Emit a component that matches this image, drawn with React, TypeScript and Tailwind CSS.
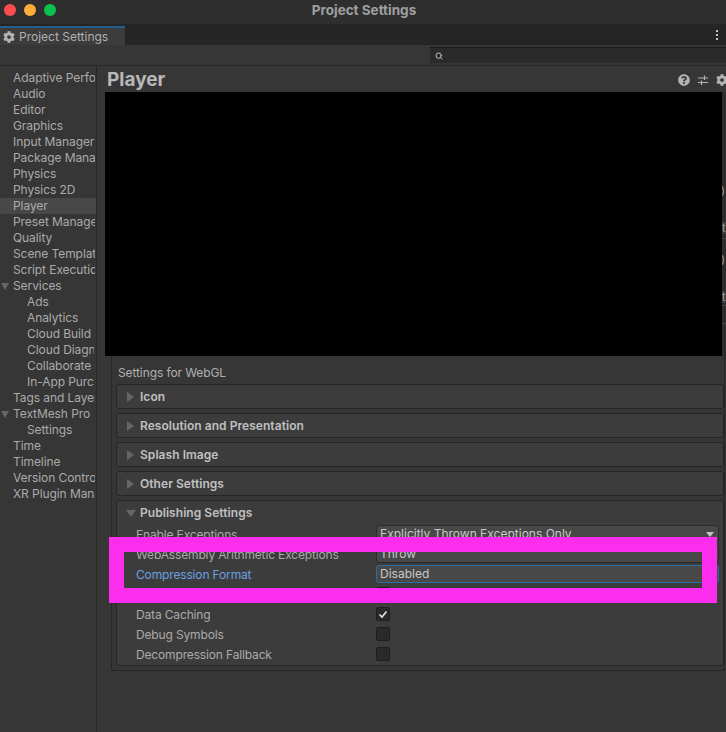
import React from "react";
import { Search } from "lucide-react";
import { FaCog, FaQuestionCircle } from "react-icons/fa";

const sidebar = [
  { label: "Adaptive Performance" },
  { label: "Audio" },
  { label: "Editor" },
  { label: "Graphics" },
  { label: "Input Manager" },
  { label: "Package Manager" },
  { label: "Physics" },
  { label: "Physics 2D" },
  { label: "Player", active: true },
  { label: "Preset Manager" },
  { label: "Quality" },
  { label: "Scene Template" },
  { label: "Script Execution Order" },
  { label: "Services", open: true },
  { label: "Ads", child: true },
  { label: "Analytics", child: true },
  { label: "Cloud Build", child: true },
  { label: "Cloud Diagnostics", child: true },
  { label: "Collaborate", child: true },
  { label: "In-App Purchasing", child: true },
  { label: "Tags and Layers" },
  { label: "TextMesh Pro", open: true },
  { label: "Settings", child: true },
  { label: "Time" },
  { label: "Timeline" },
  { label: "Version Control" },
  { label: "XR Plugin Management" },
];

function Foldout({ label }: { label: string }) {
  return (
    <div className="h-[25px] flex items-center rounded-[3px] border border-[#252525] bg-[#3c3c3c] pl-[10px] mb-1">
      <div className="w-0 h-0 border-y-[5px] border-y-transparent border-l-[7px] border-l-[#666666]" />
      <span className="ml-[6px] text-[12px] font-semibold tracking-[0.05px] text-[#c0c0c0]">{label}</span>
    </div>
  );
}

function Row({ label, blue, children }: { label: string; blue?: boolean; children?: React.ReactNode }) {
  return (
    <div className="h-5 flex items-center">
      <span className={`w-[240px] shrink-0 text-[12px] tracking-[-0.15px] ${blue ? "text-[#6a9fe0]" : "text-[#aaaaaa]"}`}>{label}</span>
      {children}
    </div>
  );
}

function Select({ label, focus, arrow }: { label: string; focus?: boolean; arrow?: boolean }) {
  return (
    <div
      className={`w-[343px] h-[18px] mb-[2px] flex items-center justify-between rounded-[3px] border bg-[#484848] px-[3px] text-[12px] text-[#c8c8c8] ${
        focus ? "border-[#2a6ea8]" : "border-[#2b2b2b]"
      }`}
    >
      <span>{label}</span>
      {arrow && <div className="mr-[1px] w-0 h-0 border-x-[4px] border-x-transparent border-t-[5px] border-t-[#c4c4c4]" />}
    </div>
  );
}

function Check({ checked }: { checked?: boolean }) {
  return (
    <div className="w-[14px] h-[14px] mb-[2px] flex items-center justify-center rounded-[2px] border border-[#1e1e1e] bg-[#2a2a2a]">
      {checked && (
        <svg width="10" height="10" viewBox="0 0 10 10" fill="none" stroke="#e8e8e8" strokeWidth="1.6">
          <path d="M1.5 5.5 L4 8 L8.5 2.5" />
        </svg>
      )}
    </div>
  );
}

export default function App() {
  return (
    <div className="relative w-[726px] h-[732px] overflow-hidden bg-[#363636] font-['Inter',sans-serif] flex flex-col">
      {/* title bar */}
      <div className="relative h-6 shrink-0 flex items-center justify-center bg-[#2e2e2e]">
        <div className="absolute left-1 top-[4px] flex gap-2">
          <div className="w-3 h-3 rounded-full bg-[#fc4b51]" />
          <div className="w-3 h-3 rounded-full bg-[#fdae3a]" />
          <div className="w-3 h-3 rounded-full bg-[#0ac24f]" />
        </div>
        <span className="mb-[5px] ml-[2px] text-[13.5px] leading-4 font-bold text-[#a0a0a0]">Project Settings</span>
      </div>
      {/* tabs */}
      <div className="h-[21px] shrink-0 flex items-stretch justify-between bg-[#252525]">
        <div className="w-[125px] mt-[2px] flex items-center gap-[4px] pl-[3px] border-t-2 border-[#235d8c] bg-[#3c3c3c]">
          <FaCog size={12} color="#b4b4b4" />
          <span className="text-[12px] text-[#b0b0b0]">Project Settings</span>
        </div>
        <div className="flex flex-col justify-center gap-[2px] pr-[8px]">
          <div className="w-[2px] h-[2px] bg-[#c4c4c4]" />
          <div className="w-[2px] h-[2px] bg-[#c4c4c4]" />
          <div className="w-[2px] h-[2px] bg-[#c4c4c4]" />
        </div>
      </div>
      {/* search */}
      <div className="h-[21px] shrink-0 flex justify-end bg-[#363636] border-b border-[#262626]">
        <div className="w-[296px] h-[16px] mt-[2px] flex items-center pl-[5px] bg-[#2a2a2a] border-t border-[#191919]">
          <Search size={8} stroke="#c4c4c4" strokeWidth={3} />
        </div>
      </div>
      <div className="flex-1 flex min-h-0">
        {/* sidebar */}
        <div className="w-[97px] shrink-0 overflow-hidden border-r border-[#262626] pt-[4px]">
          {sidebar.map((item) => (
            <div
              key={item.label + (item.child ? "-c" : "")}
              className={`relative h-4 flex items-center whitespace-nowrap text-[12px] tracking-[-0.08px] text-[#aaaaaa] ${item.child ? "pl-[27px]" : "pl-[13px]"} ${
                item.active ? "bg-[#484848]" : ""
              }`}
            >
              {item.open && (
                <div className="absolute left-[1px] top-[5px] w-0 h-0 border-x-[4px] border-x-transparent border-t-[7px] border-t-[#666666]" />
              )}
              <span className={`block overflow-hidden ${item.child ? "w-[67px]" : "w-[82px]"}`}>{item.label}</span>
            </div>
          ))}
        </div>
        {/* main */}
        <div className="flex-1 min-w-0 overflow-hidden">
          <div className="h-[26px] flex items-center justify-between pl-[10px]">
            <span className="text-[19px] leading-none font-bold text-[#b8b8b8]">Player</span>
            <div className="flex items-center gap-[8px] -mr-[2px] pt-[2px]">
              <FaQuestionCircle size={12} color="#b4b4b4" />
              <svg width="10" height="12" viewBox="0 0 10 12" fill="none" stroke="#b4b4b4" strokeWidth="1.2">
                <path d="M0 4 H10 M6.5 1.5 V6 M0 8.5 H10 M3.5 6.5 V11" />
              </svg>
              <FaCog size={12} color="#b4b4b4" />
            </div>
          </div>
          <div className="ml-2 flex">
            <div className="w-[617px] h-[264px] shrink-0 bg-black" />
            {/* fields cut off behind the preview */}
            <div className="flex-1 flex flex-col bg-[#2c2c2c] text-[11px] leading-3 text-[#a0a0a0] overflow-hidden">
              <div className="h-[92px] shrink-0" />
              <div className="h-3 shrink-0 -ml-[1px]">)</div>
              <div className="h-[26px] shrink-0" />
              <div className="h-3 shrink-0 bg-[#3c3c3c]">t</div>
              <div className="h-1 shrink-0" />
              <div className="h-px shrink-0 bg-[#444444]" />
              <div className="h-[14px] shrink-0" />
              <div className="h-3 shrink-0 -ml-[1px]">)</div>
              <div className="h-[26px] shrink-0" />
              <div className="h-3 shrink-0 bg-[#3c3c3c]">t</div>
              <div className="h-[2px] shrink-0" />
              <div className="h-px shrink-0 bg-[#444444]" />
              <div className="h-[17px] shrink-0" />
              <div className="h-px shrink-0 bg-[#444444]" />
            </div>
          </div>
          <div className="ml-[14px] mr-[1px] pl-[4px] border border-t-0 border-[#262626] pb-[4px] rounded-b-[3px] bg-[#363636]">
            <div className="h-7 pt-[9px] pl-[2px] text-[12px] leading-[16px] tracking-[-0.1px] text-[#b0b0b0]">Settings for WebGL</div>
            <Foldout label="Icon" />
            <Foldout label="Resolution and Presentation" />
            <Foldout label="Splash Image" />
            <Foldout label="Other Settings" />
            <div className="h-[166px] rounded-[3px] border border-[#252525] bg-[#3c3c3c] pl-[19px]">
              <div className="h-[24px] flex items-center -ml-[10px]">
                <div className="w-0 h-0 border-x-[5px] border-x-transparent border-t-[7px] border-t-[#666666]" />
                <span className="ml-[4px] text-[12px] font-semibold tracking-[0.05px] text-[#c0c0c0]">Publishing Settings</span>
              </div>
              <Row label="Enable Exceptions">
                <Select label="Explicitly Thrown Exceptions Only" arrow />
              </Row>
              <Row label="WebAssembly Arithmetic Exceptions">
                <Select label="Throw" />
              </Row>
              <Row label="Compression Format" blue>
                <Select label="Disabled" focus />
              </Row>
              <Row label="">
                <Check />
              </Row>
              <Row label="Data Caching">
                <Check checked />
              </Row>
              <Row label="Debug Symbols">
                <Check />
              </Row>
              <Row label="Decompression Fallback">
                <Check />
              </Row>
            </div>
          </div>
        </div>
      </div>
      {/* annotation frame */}
      <div className="absolute left-[109px] top-[537px] w-[608px] h-[66px] border-[15px] border-[#fd2ded]" />
    </div>
  );
}
